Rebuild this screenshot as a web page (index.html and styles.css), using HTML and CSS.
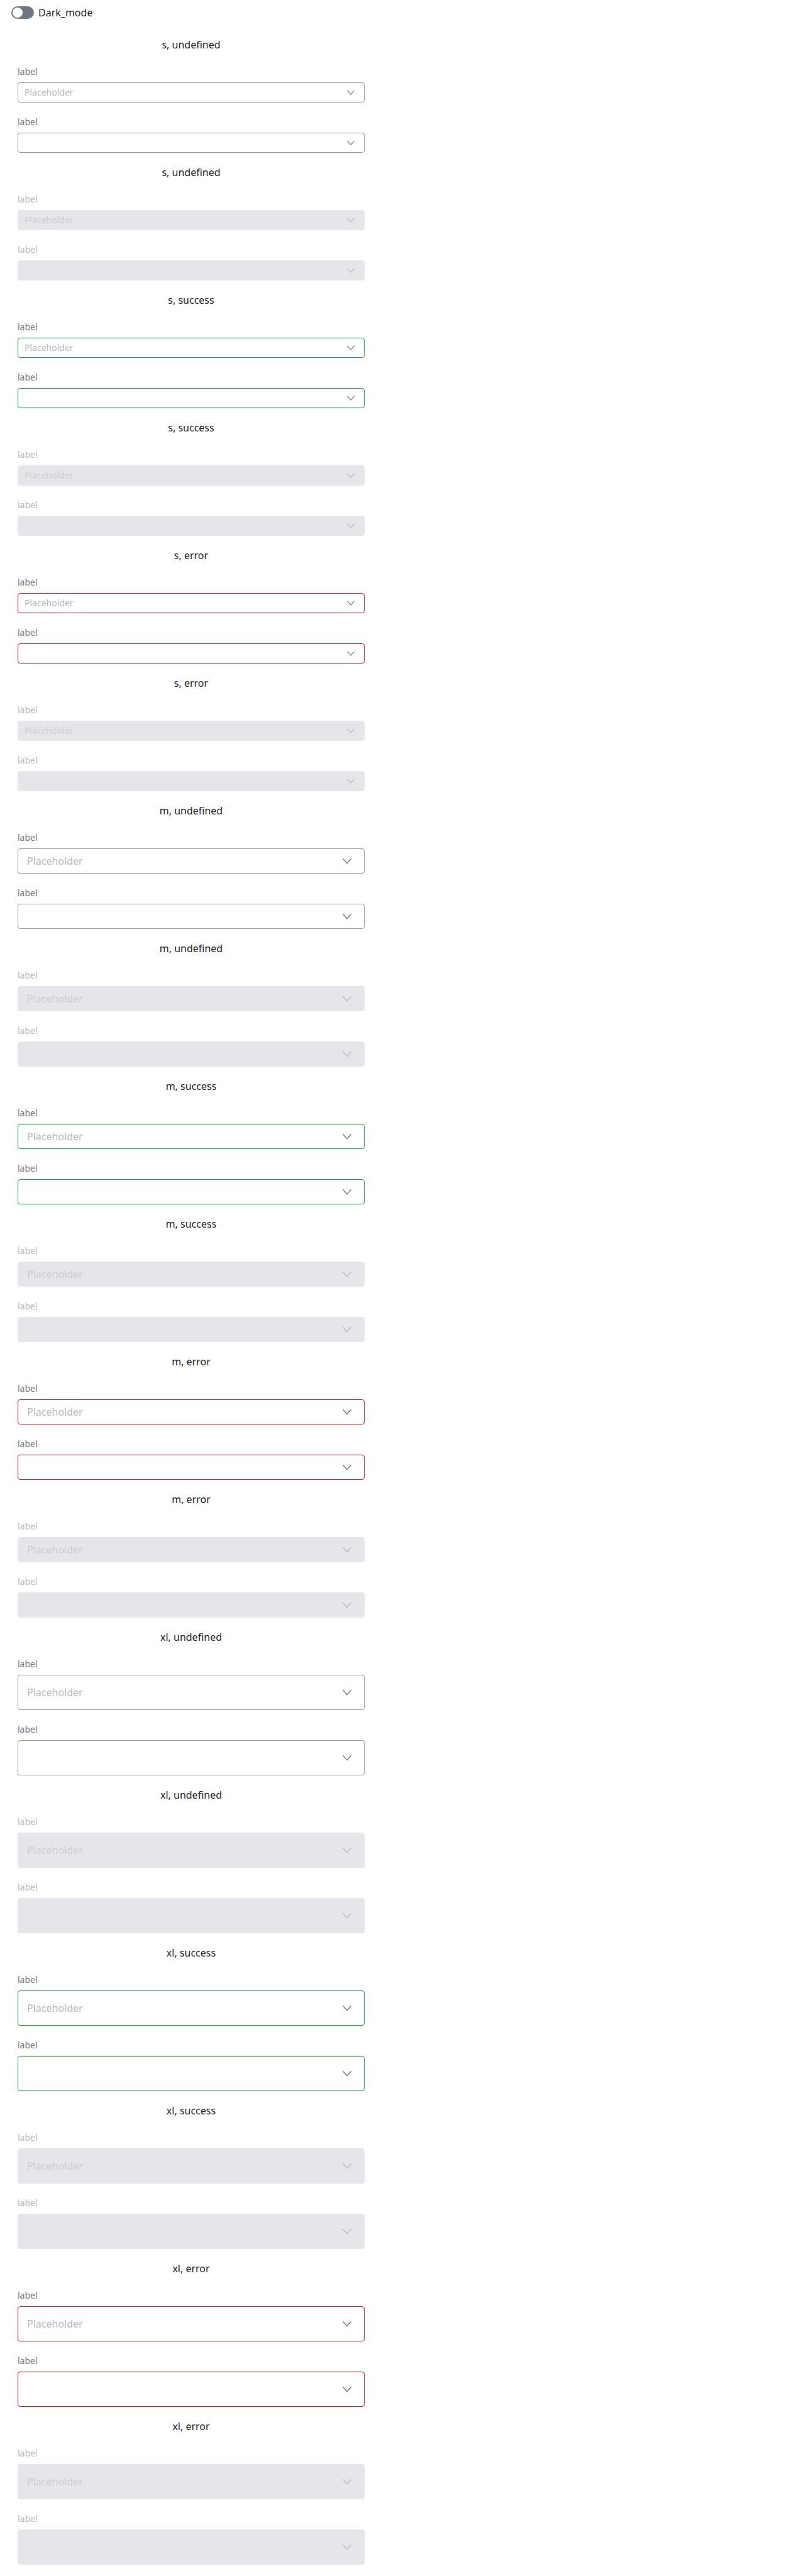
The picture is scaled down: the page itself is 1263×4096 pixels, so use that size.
FILE: index.html
```html
<!DOCTYPE html>
<html lang="en">
<head>
<meta charset="utf-8">
<title>Select</title>
<link rel="stylesheet" href="styles.css">
</head>
<body>
<header class="toolbar">
  <label class="toggle"><input class="toggle-input" type="checkbox" role="switch">Dark_mode</label>
</header>
<main class="stories" id="stories"></main>
<template id="field-template">
  <div class="field">
    <label class="field-label">label</label>
    <div class="control">
      <select class="select"><option></option></select>
      <svg class="chevron" viewBox="0 0 14 14" aria-hidden="true"><path d="M0.5 3.3 7 10.7 13.5 3.3"/></svg>
    </div>
  </div>
</template>
<script src="stories.js"></script>
</body>
</html>
```
FILE: stories.js
```js
const stories = document.getElementById('stories');
const template = document.getElementById('field-template');
let count = 0;

function addField(section, placeholder, disabled) {
  const field = template.content.cloneNode(true);
  const select = field.querySelector('select');
  count += 1;
  select.id = 'select-' + count;
  select.disabled = disabled;
  select.options[0].textContent = placeholder;
  field.querySelector('label').htmlFor = select.id;
  section.append(field);
}

for (const size of ['s', 'm', 'xl']) {
  for (const status of ['undefined', 'success', 'error']) {
    for (const disabled of [false, true]) {
      const section = document.createElement('section');
      section.className = 'story size-' + size + ' status-' + status + (disabled ? ' is-disabled' : '');
      const title = document.createElement('h2');
      title.className = 'story-title';
      title.textContent = size + ', ' + status;
      section.append(title);
      addField(section, 'Placeholder', disabled);
      addField(section, '', disabled);
      stories.append(section);
    }
  }
}
```
FILE: styles.css
```css
* {
  box-sizing: border-box;
}

body {
  margin: 0;
  background: #fff;
  color: #1f2229;
  font: 16px/24px "Noto Sans", sans-serif;
}

.toolbar {
  display: flex;
  padding: 8px 18px;
}

.toggle {
  display: flex;
  align-items: center;
  gap: 7px;
}

.toggle-input {
  appearance: none;
  display: flex;
  width: 36px;
  height: 20px;
  margin: 0;
  padding: 2px;
  border-radius: 10px;
  background: #717681;
}

.toggle-input::before {
  content: "";
  width: 16px;
  height: 16px;
  border-radius: 50%;
  background: #fff;
}

.toggle-input:checked {
  justify-content: flex-end;
}

.stories {
  max-width: 608px;
  padding: 0 28px 18px;
}

.story-title {
  margin: 0;
  padding: 19px 0 0;
  font-size: 16px;
  font-weight: 400;
  line-height: 24px;
  text-align: center;
}

.field {
  padding-top: 21px;
}

.field-label {
  display: block;
  padding-bottom: 7px;
  color: #717681;
  font-size: 14px;
  line-height: 20px;
}

.control {
  display: grid;
  align-items: center;
}

.select,
.chevron {
  grid-area: 1 / 1;
}

.select {
  appearance: none;
  width: 100%;
  height: 40px;
  margin: 0;
  padding: 0 48px 0 14px;
  border: 1px solid #9698a6;
  border-radius: 4px;
  background: #fff;
  color: #b5b8bf;
  font: inherit;
  opacity: 1;
}

.chevron {
  justify-self: end;
  width: 14px;
  height: 14px;
  margin-right: 21px;
  fill: none;
  stroke: #717681;
  stroke-width: 1.4;
  pointer-events: none;
}

.size-s .select {
  height: 32px;
  padding-left: 10px;
  font-size: 14px;
}

.size-s .chevron {
  width: 12px;
  height: 12px;
  margin-right: 16px;
}

.size-xl .select {
  height: 56px;
}

.status-success .select {
  border-color: #1f9d48;
}

.status-error .select {
  border-color: #dc2020;
}

.is-disabled .field-label {
  color: #b5b8bf;
}

.is-disabled .select {
  border-color: #e5e6ea;
  background: #e5e6ea;
  color: #cbcdd3;
}

.is-disabled .chevron {
  stroke: #b5b8bf;
}
```
